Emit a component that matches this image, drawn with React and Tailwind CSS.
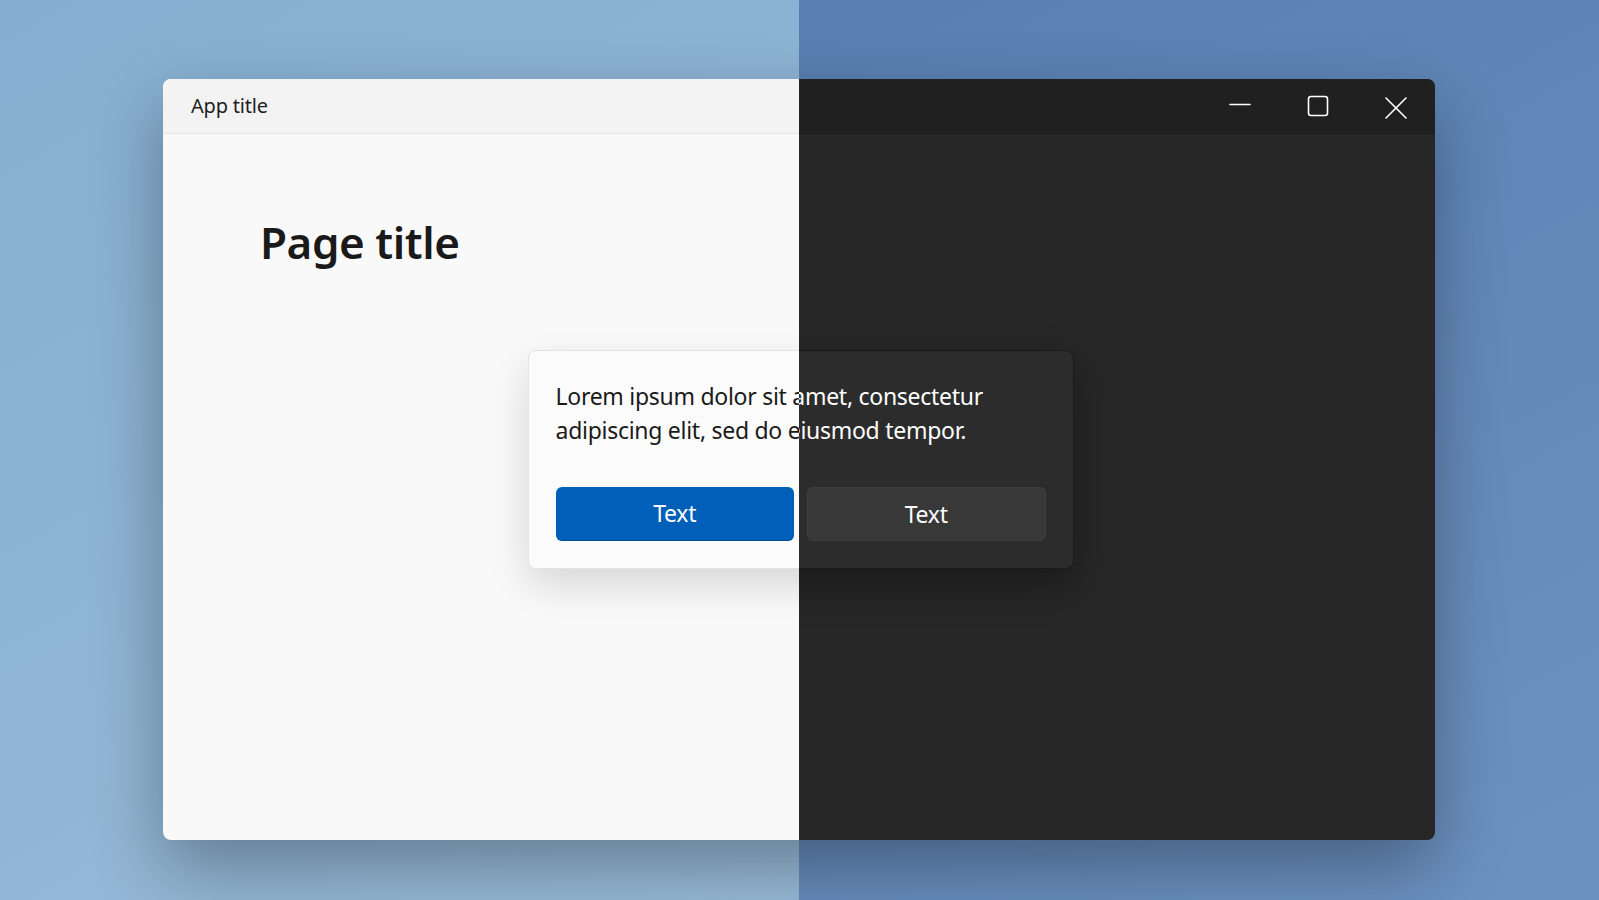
import React from "react";

const FONT = "font-['Noto_Sans','Open_Sans',sans-serif]";

// Window caption buttons (only visible on the dark half)
const Minimize = ({ color }) => (
  <svg width="22" height="22" viewBox="0 0 22 22" fill="none">
    <path d="M1 9.5h20" stroke={color} strokeWidth="1.6" strokeLinecap="round" />
  </svg>
);

const Maximize = ({ color }) => (
  <svg width="22" height="22" viewBox="0 0 22 22" fill="none">
    <rect x="1.5" y="1.5" width="19" height="19" rx="2.5" stroke={color} strokeWidth="1.6" />
  </svg>
);

const Close = ({ color }) => (
  <svg width="22" height="22" viewBox="0 0 22 22" fill="none" className="mt-[3px]">
    <path d="M1 1l20 20M21 1L1 21" stroke={color} strokeWidth="1.6" strokeLinecap="round" />
  </svg>
);

const Scene = ({ dark }) => {
  const fg = dark ? "#ffffff" : "#1a1a1a";

  return (
    <div
      className={`col-start-1 row-start-1 w-[1599px] h-[900px] pt-[79px] pl-[163px] ${
        dark
          ? "bg-linear-to-br from-[#5179ab] to-[#6d92c1] [clip-path:inset(0_0_0_799px)]"
          : "bg-linear-to-br from-[#86aed0] to-[#9ebfdb]"
      }`}
    >
      {/* Window */}
      <div
        className={`relative w-[1272px] h-[761px] rounded-[8px] overflow-hidden flex flex-col shadow-[0_28px_70px_rgba(0,0,0,0.32)] ${
          dark ? "bg-[#272727]" : "bg-[#f9f9f9]"
        }`}
      >
        {/* Title bar */}
        <div
          className={`h-[55px] shrink-0 flex items-center border-b ${
            dark ? "bg-[#202020] border-[#1c1c1c]" : "bg-[#f3f3f3] border-[#e5e5e5]"
          }`}
        >
          <span className={`pl-[28px] text-[20px] leading-[28px] tracking-[-0.01em] ${dark ? "text-white" : "text-[#1f1f1f]"}`}>
            App title
          </span>
          <div className="ml-auto flex h-full">
            <div className="w-[78px] h-full flex items-center justify-center">
              <Minimize color={fg} />
            </div>
            <div className="w-[78px] h-full flex items-center justify-center">
              <Maximize color={fg} />
            </div>
            <div className="w-[78px] h-full flex items-center justify-center">
              <Close color={fg} />
            </div>
          </div>
        </div>

        {/* Page content */}
        <div className="flex-1 pl-[97px] pt-[85px]">
          <h1
            className={`text-[44px] leading-[46px] font-semibold tracking-[-0.01em] ${dark ? "text-white" : "text-[#1a1a1a]"}`}
          >
            Page title
          </h1>
        </div>

        {/* Dialog over the page */}
        <div className="absolute inset-0 flex items-center justify-center">
          <div
            className={`ml-[3px] w-[546px] rounded-[8px] border px-[27px] pt-[28px] pb-[27px] ${
              dark
                ? "bg-[#2c2c2c] border-[#1a1a1a] shadow-[0_16px_40px_rgba(0,0,0,0.35)]"
                : "bg-[#fbfbfb] border-[#e3e3e3] shadow-[0_16px_40px_rgba(0,0,0,0.14)]"
            }`}
          >
            <p
              className={`text-[23px] leading-[34px] tracking-[-0.012em] ${dark ? "text-white" : "text-[#1a1a1a]"}`}
            >
              Lorem ipsum dolor sit amet, consectetur
              <br />
              adipiscing elit, sed do eiusmod tempor.
            </p>
            <div className="mt-[40px] grid grid-cols-2 gap-[13px]">
              <button className="h-[54px] rounded-[6px] bg-[#005fb8] border-b border-[#004c99] text-white text-[23px] tracking-[-0.01em]">
                Text
              </button>
              <button
                className={`h-[54px] rounded-[6px] border text-[23px] tracking-[-0.01em] ${
                  dark
                    ? "bg-[#383838] border-[#3e3e3e] text-white"
                    : "bg-white border-[#e0e0e0] text-[#1a1a1a]"
                }`}
              >
                Text
              </button>
            </div>
          </div>
        </div>
      </div>
    </div>
  );
};

export default function App() {
  return (
    <div className={`grid w-[1599px] h-[900px] overflow-hidden ${FONT}`}>
      <Scene dark={false} />
      <Scene dark />
    </div>
  );
}
